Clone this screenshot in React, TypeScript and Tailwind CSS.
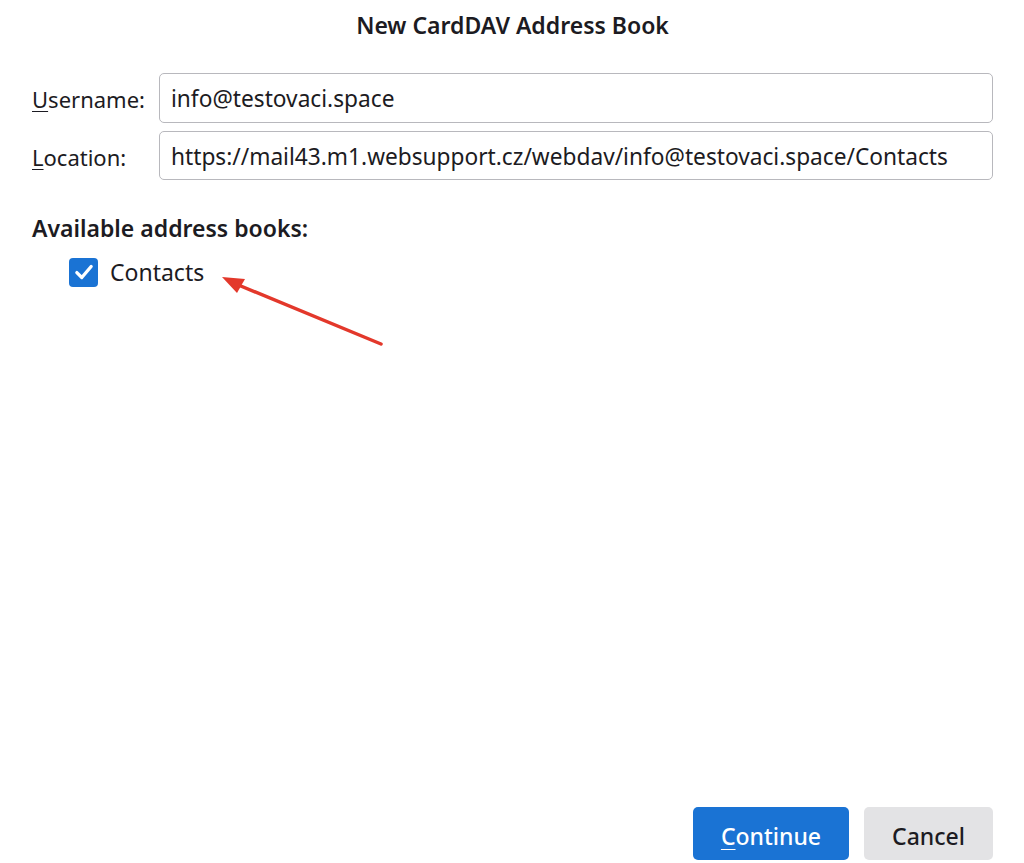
import React from "react";

// Row of the form: label on the left, text field on the right
const Field = ({ label, accessKey, value, height }: { label: string; accessKey: string; value: string; height: string }) => (
  <>
    <label className="pt-[2px] text-[22px] text-[#1c1b22] leading-none">
      <span className="underline underline-offset-[3px] decoration-1">{accessKey}</span>
      {label.slice(accessKey.length)}
    </label>
    <div className={`flex items-center rounded-[5px] border border-[#b8b8bd] bg-white px-[11px] pt-[3px] ${height}`}>
      <span className="text-[22.7px] text-[#1c1b22] whitespace-nowrap">{value}</span>
    </div>
  </>
);

export default function App() {
  return (
    <div
      className="relative flex h-[863px] w-[1024px] flex-col bg-white pl-[32px] pr-[31px] text-[#1c1b22]"
      style={{ fontFamily: '"Noto Sans", "Open Sans", sans-serif' }}
    >
      <h1 className="pt-[9px] text-center text-[23px] font-semibold leading-[32px]">New CardDAV Address Book</h1>

      <div className="mt-[32px] grid grid-cols-[114px_1fr] items-center gap-x-[13px] gap-y-[8px]">
        <Field label="Username:" accessKey="U" value="info@testovaci.space" height="h-[50px]" />
        <Field
          label="Location:"
          accessKey="L"
          value="https://mail43.m1.websupport.cz/webdav/info@testovaci.space/Contacts"
          height="h-[49px]"
        />
      </div>

      <div className="mt-[33px] text-[23px] font-semibold leading-[30px]">Available address books:</div>

      <div className="mt-[14px] flex items-center gap-[12px] pl-[37px]">
        <span className="flex h-[29px] w-[29px] items-center justify-center rounded-[4px] bg-[#1a73d4]">
          <svg width="22" height="22" viewBox="0 0 20 20" fill="none">
            <path d="M3.5 10.5 L8 15 L16.5 5" stroke="white" strokeWidth="3" strokeLinecap="round" strokeLinejoin="round" />
          </svg>
        </span>
        <span className="text-[23px] leading-[30px]">Contacts</span>
      </div>

      <div className="flex-1" />

      <div className="flex justify-end gap-[15px] pb-[3px]">
        <button className="h-[53px] w-[156px] rounded-[5px] bg-[#1a73d4] pt-[5px] text-[23px] font-medium text-white">
          <span className="underline underline-offset-[4px] decoration-1">C</span>ontinue
        </button>
        <button className="h-[53px] w-[129px] rounded-[5px] bg-[#e3e3e5] pt-[5px] text-[23px] font-medium text-[#1c1b22]">
          Cancel
        </button>
      </div>

      {/* red annotation arrow pointing at the address book entry */}
      <svg className="pointer-events-none absolute left-0 top-0" width="1024" height="863">
        <line x1="381" y1="344" x2="236" y2="284" stroke="#e3382b" strokeWidth="3.5" strokeLinecap="round" />
        <polygon points="222,277 245,279 237,293" fill="#e3382b" />
      </svg>
    </div>
  );
}
